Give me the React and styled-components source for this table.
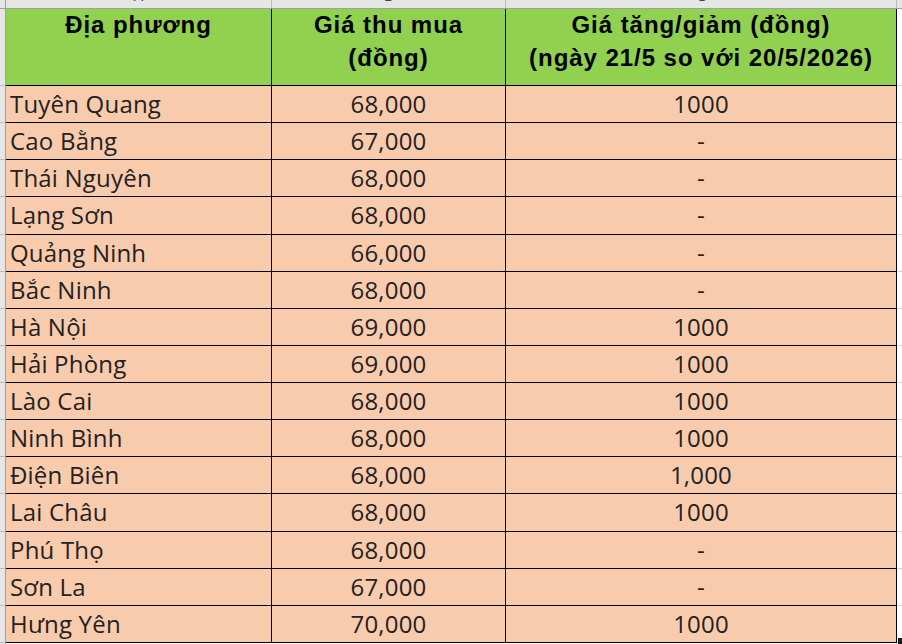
import React from 'react';
import styled, { createGlobalStyle } from 'styled-components';

const GlobalStyle = createGlobalStyle`
    html, body {
        margin: 0;
        padding: 0;
        background: #ffffff;
    }
    body {
        width: 902px;
        height: 644px;
        overflow: hidden;
    }
`;

const WIDTHS = [266, 234, 391];

const rows = [
    ['Tuyên Quang', '68,000', '1000'],
    ['Cao Bằng', '67,000', '-'],
    ['Thái Nguyên', '68,000', '-'],
    ['Lạng Sơn', '68,000', '-'],
    ['Quảng Ninh', '66,000', '-'],
    ['Bắc Ninh', '68,000', '-'],
    ['Hà Nội', '69,000', '1000'],
    ['Hải Phòng', '69,000', '1000'],
    ['Lào Cai', '68,000', '1000'],
    ['Ninh Bình', '68,000', '1000'],
    ['Điện Biên', '68,000', '1,000'],
    ['Lai Châu', '68,000', '1000'],
    ['Phú Thọ', '68,000', '-'],
    ['Sơn La', '67,000', '-'],
    ['Hưng Yên', '70,000', '1000'],
];

const Sheet = styled.div`
    display: flex;
    flex-direction: column;
    width: 902px;
    height: 644px;
    overflow: hidden;
`;

const ColumnBar = styled.div`
    display: flex;
    height: 8px;
    background: #e6e6e6;
    border-bottom: 1px solid #a0a0a0;
    overflow: hidden;
`;

const Corner = styled.div`
    width: 5px;
    border-right: 1px solid #a0a0a0;
    flex: none;
`;

const ColumnLetter = styled.div`
    width: ${p => p.$w}px;
    flex: none;
    box-sizing: border-box;
    border-right: 1px solid #bdbdbd;
    display: flex;
    justify-content: center;
    align-items: flex-end;
    font-family: "Open Sans", "Liberation Sans", sans-serif;
    font-size: 15px;
    line-height: 15px;
    color: #444;
    & > span {
        margin-bottom: 5px;
    }
`;

const Body = styled.div`
    display: flex;
    flex: 1;
`;

const RowHeads = styled.div`
    width: 5px;
    flex: none;
    background: #e6e6e6;
    border-right: 1px solid #a0a0a0;
    display: flex;
    flex-direction: column;
`;

const RowHead = styled.div`
    box-sizing: border-box;
    height: ${p => p.$h}px;
    border-bottom: 1px solid #bdbdbd;
    flex: none;
`;

const Table = styled.div`
    display: flex;
    flex-direction: column;
    flex: none;
`;

const Row = styled.div`
    display: flex;
    height: ${p => p.$h}px;
    flex: none;
`;

const Cell = styled.div`
    box-sizing: border-box;
    width: ${p => p.$w}px;
    flex: none;
    border-right: 1px solid #000;
    border-bottom: 1px solid #000;
    background: ${p => (p.$head ? '#92d050' : '#f8cbad')};
    display: flex;
    justify-content: ${p => (p.$left ? 'flex-start' : 'center')};
    align-items: ${p => (p.$head ? 'flex-start' : 'center')};
    padding: ${p => (p.$left ? '0 0 0 4px' : '0')};
    text-align: center;
    white-space: nowrap;
`;

const HeadText = styled.div`
    font-family: "Liberation Sans", Arial, sans-serif;
    font-weight: bold;
    font-size: 24px;
    letter-spacing: 0.95px;
    line-height: 33px;
    color: #000;
    margin-top: -1px;
`;

const DataText = styled.div`
    font-family: "Open Sans", "Noto Sans", sans-serif;
    font-size: 24px;
    letter-spacing: 0.2px;
    line-height: 36px;
    color: #222222;
`;

const Margin = styled.div`
    flex: 1;
    display: flex;
    flex-direction: column;
`;

const MarginCell = styled.div`
    box-sizing: border-box;
    height: ${p => p.$h}px;
    border-bottom: 1px solid #d4d4d4;
    flex: none;
`;

const FillHandle = styled.div`
    position: absolute;
    left: 898px;
    top: 638px;
    width: 6px;
    height: 6px;
    background: #1a1a1a;
`;

const HEAD_H = 77;
const ROW_H = 37.13;

export default function App() {
    return (
        <Sheet>
            <GlobalStyle />
            <ColumnBar>
                <Corner />
                {['A', 'B', 'C'].map((l, i) => (
                    <ColumnLetter key={l} $w={WIDTHS[i]}><span>{l}</span></ColumnLetter>
                ))}
            </ColumnBar>
            <Body>
                <RowHeads>
                    <RowHead $h={HEAD_H} />
                    {rows.map((r, i) => <RowHead key={i} $h={ROW_H} />)}
                </RowHeads>
                <Table>
                    <Row $h={HEAD_H}>
                        <Cell $head $w={WIDTHS[0]}><HeadText>Địa phương</HeadText></Cell>
                        <Cell $head $w={WIDTHS[1]}><HeadText>Giá thu mua<br />(đồng)</HeadText></Cell>
                        <Cell $head $w={WIDTHS[2]}><HeadText>Giá tăng/giảm (đồng)<br />(ngày 21/5 so với 20/5/2026)</HeadText></Cell>
                    </Row>
                    {rows.map((r, i) => (
                        <Row key={i} $h={ROW_H}>
                            <Cell $left $w={WIDTHS[0]}><DataText>{r[0]}</DataText></Cell>
                            <Cell $w={WIDTHS[1]}><DataText>{r[1]}</DataText></Cell>
                            <Cell $w={WIDTHS[2]}><DataText>{r[2]}</DataText></Cell>
                        </Row>
                    ))}
                </Table>
                <Margin>
                    <MarginCell $h={HEAD_H} />
                    {rows.map((r, i) => <MarginCell key={i} $h={ROW_H} />)}
                </Margin>
            </Body>
            <FillHandle />
        </Sheet>
    );
}
